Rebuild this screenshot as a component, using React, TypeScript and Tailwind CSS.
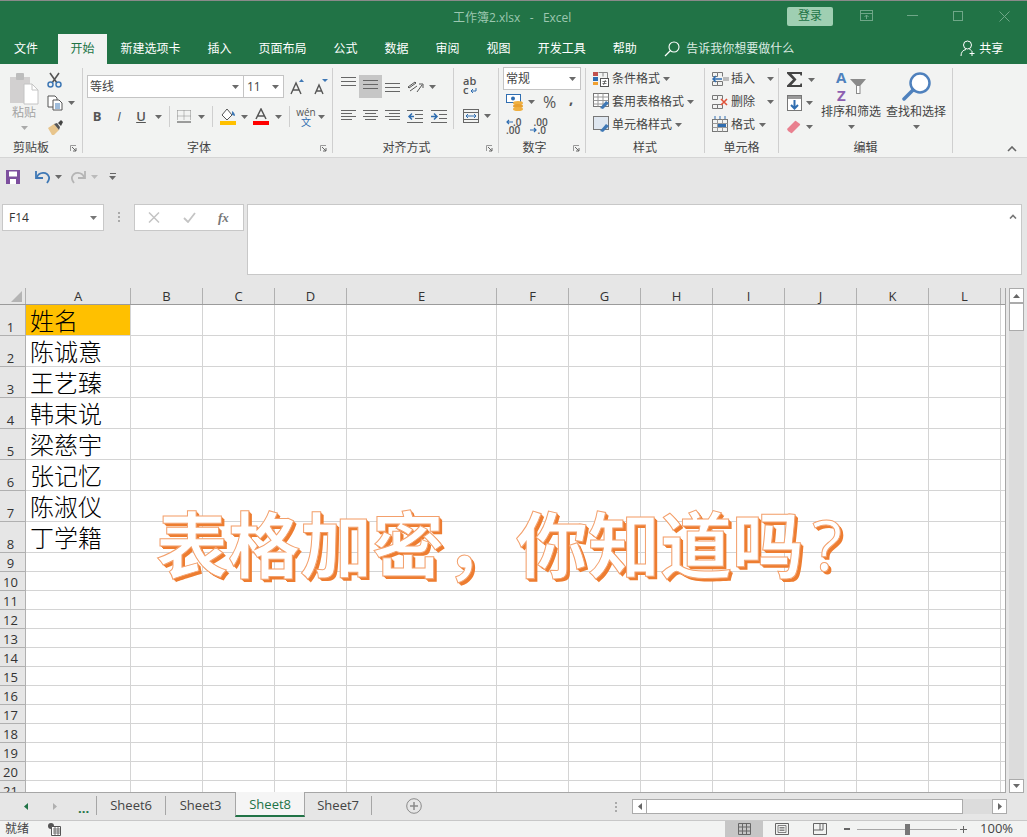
import type { ReactNode } from "react";

const COLS = ["A", "B", "C", "D", "E", "F", "G", "H", "I", "J", "K", "L"];
const COL_WIDTHS = ["w-[105px]", "w-[72px]", "w-[72px]", "w-[72px]", "w-[150px]", "w-[72px]", "w-[72px]", "w-[72px]", "w-[72px]", "w-[72px]", "w-[72px]", "w-[72px]"];
const NAMES = ["姓名", "陈诚意", "王艺臻", "韩束说", "梁慈宇", "张记忆", "陈淑仪", "丁学籍"];
const ROW_NUMBERS = Array.from({ length: 21 }, (_, i) => i + 1);

function Caret({ color = "#6a6a6a" }: { color?: string }) {
  return (
    <svg width="7" height="4" viewBox="0 0 7 4" className="shrink-0">
      <path d="M0 0h7L3.5 4z" fill={color} />
    </svg>
  );
}

function Slot({ w, children }: { w: string; children?: ReactNode }) {
  return <div className={`${w} flex h-full shrink-0 items-center justify-center`}>{children}</div>;
}

function Lines({ widths, gap = 4, color = "#666" }: { widths: [number, number][]; gap?: number; color?: string }) {
  return (
    <svg width="15" height="13" viewBox="0 0 15 13">
      {widths.map(([x, w], i) => (
        <rect key={i} x={x} y={i * gap} width={w} height="1" fill={color} />
      ))}
    </svg>
  );
}

// ── clipboard ──
function PasteIcon() {
  return (
    <svg width="30" height="33" viewBox="0 0 30 33">
      <rect x="1" y="5" width="20" height="26" fill="#d2d0d0" />
      <rect x="7" y="1" width="8" height="7" rx="1" fill="#bdbdbd" />
      <path d="M15 12h8l6 6v14H15z" fill="#fff" stroke="#c4c4c4" />
      <path d="M23 12v6h6" fill="none" stroke="#c4c4c4" />
    </svg>
  );
}

function ScissorsIcon() {
  return (
    <svg width="15" height="16" viewBox="0 0 15 16" fill="none">
      <path d="M3 1l7 10M12 1L5 11" stroke="#555" strokeWidth="1.6" />
      <circle cx="3.5" cy="12.5" r="2.5" stroke="#3f78b5" strokeWidth="1.5" />
      <circle cx="11.5" cy="12.5" r="2.5" stroke="#3f78b5" strokeWidth="1.5" />
    </svg>
  );
}

function CopyIcon() {
  return (
    <svg width="16" height="16" viewBox="0 0 16 16" fill="none">
      <path d="M1 1h7l2 2v9H1z" fill="#fff" stroke="#555" />
      <path d="M6 5h6l3 3v7H6z" fill="#fff" stroke="#555" />
      <path d="M8 9h5M8 11h5M8 13h5" stroke="#3f78b5" />
    </svg>
  );
}

function BrushIcon() {
  return (
    <svg width="16" height="15" viewBox="0 0 16 15">
      <path d="M1 8l6-4 5 6-5 5H5z" fill="#e8c58c" />
      <path d="M7 4l3-1 3 4-1 3z" fill="#555" />
      <path d="M11 3l3-3 2 2-2 4z" fill="#444" />
    </svg>
  );
}

// ── font ──
function GrowA({ up }: { up: boolean }) {
  return (
    <svg width="15" height="16" viewBox="0 0 15 16" fill="none">
      <path d={up ? "M1 15L6 4l5 11M3 11h6" : "M2 15L6 6l4 9M3.5 12h5"} stroke="#555" strokeWidth="1.4" />
      <path d={up ? "M9 3l2.5-3L14 3z" : "M9 0h6l-3 3z"} fill="#3f78b5" />
    </svg>
  );
}

function BorderIcon() {
  return (
    <svg width="14" height="13" viewBox="0 0 14 13" fill="none">
      <path d="M.5.5h13M.5 6h13M.5.5v10M7 .5v10M13.5.5v10" stroke="#888" strokeDasharray="1 1" />
      <path d="M0 12h14" stroke="#444" />
    </svg>
  );
}

function FillIcon() {
  return (
    <svg width="17" height="17" viewBox="0 0 17 17">
      <path d="M2 7l5-6 5 6-5 5z" fill="#fff" stroke="#555" />
      <path d="M12 3c2 1 3 3 3 5l-3-1z" fill="#3f78b5" />
      <rect y="13" width="16" height="4" fill="#ffc000" />
    </svg>
  );
}

function FontColorIcon() {
  return (
    <svg width="16" height="17" viewBox="0 0 16 17" fill="none">
      <path d="M3 11L8 1l5 10M5 8h6" stroke="#555" strokeWidth="1.5" />
      <rect y="13" width="16" height="4" fill="#f00" />
    </svg>
  );
}

function WenIcon() {
  return (
    <div className="flex flex-col items-center text-[10px] leading-[10px] text-[#555]">
      <span className="h-[10px]">wén</span>
      <span className="text-[#2f6db0]">文</span>
    </div>
  );
}

// ── alignment ──
function OrientIcon() {
  return (
    <svg width="17" height="15" viewBox="0 0 17 15" fill="none">
      <path d="M1 8l7-5 1 1-7 5zM3 12l7-5" stroke="#555" />
      <path d="M10 13L15 6M12 5h4v4" stroke="#555" />
    </svg>
  );
}

function IndentIcon({ right }: { right: boolean }) {
  return (
    <svg width="16" height="13" viewBox="0 0 16 13" fill="none">
      <path d="M0 .5h16M8 4.5h8M8 8.5h8M0 12.5h16" stroke="#666" />
      <path d={right ? "M0 6.5h5M3 3.5l3 3-3 3" : "M2 6.5h5M5 3.5l-3 3 3 3"} stroke="#2f6db0" strokeWidth="1.5" />
    </svg>
  );
}

function WrapIcon() {
  return (
    <div className="relative flex h-[17px] w-[14px] flex-col text-[11px] font-semibold leading-[8px] text-[#555]">
      <span className="h-[8px]">ab</span>
      <span className="mt-px h-[8px]">c</span>
      <svg width="7" height="6" viewBox="0 0 7 6" fill="none" className="absolute bottom-0 right-0">
        <path d="M6 0v3H1M3 1L1 3l2 2" stroke="#2f6db0" />
      </svg>
    </div>
  );
}

function MergeIcon() {
  return (
    <svg width="16" height="14" viewBox="0 0 16 14" fill="none">
      <rect x=".5" y=".5" width="15" height="13" stroke="#666" />
      <path d="M.5 3.5h15M.5 10.5h15" stroke="#666" />
      <path d="M3 7h10M5 5L3 7l2 2M11 5l2 2-2 2" stroke="#2f6db0" />
    </svg>
  );
}

// ── number ──
function CurrencyIcon() {
  return (
    <svg width="18" height="18" viewBox="0 0 18 18">
      <rect x=".5" y="1.5" width="14" height="8" fill="#fff" stroke="#2f6db0" />
      <circle cx="7" cy="5.5" r="2" fill="#2f6db0" />
      <ellipse cx="12" cy="10" rx="5" ry="2" fill="#f0b040" />
      <ellipse cx="12" cy="13" rx="5" ry="2" fill="#e8a030" />
      <ellipse cx="12" cy="16" rx="5" ry="2" fill="#f0b040" />
    </svg>
  );
}

function DecimalIcon({ more }: { more: boolean }) {
  return (
    <div className="flex flex-col text-[10px] font-semibold leading-[8px] text-[#555]">
      <div className="flex h-[8px] items-center">
        <svg width="7" height="6" viewBox="0 0 7 6" fill="none" className={more ? "hidden" : "shrink-0"}>
          <path d="M7 3H1M3 1L1 3l2 2" stroke="#2f6db0" strokeWidth="1.2" />
        </svg>
        <span className={more ? "pl-[3px]" : ""}>{more ? ".00" : ".0"}</span>
      </div>
      <div className="flex h-[8px] items-center">
        <svg width="7" height="6" viewBox="0 0 7 6" fill="none" className={more ? "shrink-0" : "hidden"}>
          <path d="M0 3h6M4 1l2 2-2 2" stroke="#2f6db0" strokeWidth="1.2" />
        </svg>
        <span>{more ? ".0" : ".00"}</span>
      </div>
    </div>
  );
}

// ── styles ──
function CondIcon() {
  return (
    <svg width="16" height="16" viewBox="0 0 16 16" fill="none">
      <rect y="1" width="5" height="4" fill="#c0504d" />
      <rect y="6" width="5" height="4" fill="#2f6db0" />
      <rect y="11" width="5" height="3" fill="#f0a030" />
      <path d="M5.5 1.5h9v6M10 1.5v4" stroke="#888" />
      <rect x="7.5" y="7.5" width="8" height="8" fill="#fff" stroke="#555" />
      <path d="M9.5 10.5h4M9.5 12.5h4M12.5 9l-2 5" stroke="#555" strokeWidth=".8" />
    </svg>
  );
}

function TableStyleIcon({ plain }: { plain: boolean }) {
  return (
    <svg width="17" height="17" viewBox="0 0 17 17" fill="none">
      <rect x=".5" y=".5" width="15" height="13" fill={plain ? "#dfe7f0" : "#fff"} stroke="#777" />
      {!plain && <path d="M.5 4h15M.5 7.5h15M.5 11h15M5 .5v13M10 .5v13" stroke="#999" />}
      <path d="M7 15l6-7 3 2-6 6z" fill="#3f78b5" />
    </svg>
  );
}

// ── cells ──
function CellOpIcon({ kind }: { kind: "insert" | "delete" }) {
  return (
    <svg width="17" height="16" viewBox="0 0 17 16" fill="none">
      <path d="M.5 1.5h5v4h-5zM.5 10.5h5v4h-5zM5.5 1.5h5v4M5.5 10.5h5v4h-5z" stroke="#777" />
      {kind === "insert" ? (
        <>
          <rect x="11" y="6" width="6" height="4" fill="#bbb" />
          <path d="M1 8h9M4 5L1 8l3 3" stroke="#2f6db0" strokeWidth="1.5" />
        </>
      ) : (
        <path d="M9 5l6 6M15 5l-6 6" stroke="#e0533a" strokeWidth="1.6" />
      )}
    </svg>
  );
}

function FormatIcon() {
  return (
    <svg width="17" height="17" viewBox="0 0 17 17" fill="none">
      <path d="M3 0v3M8 0v3M13 0v3" stroke="#2f6db0" />
      <rect x=".5" y="3.5" width="15" height="12" stroke="#777" />
      <path d="M.5 7.5h15M.5 11.5h15M5.5 3.5v12M10.5 3.5v12" stroke="#999" />
      <rect x="6" y="8" width="8" height="3" fill="#2f6db0" />
    </svg>
  );
}

// ── editing ──
function SigmaIcon() {
  return (
    <svg width="16" height="15" viewBox="0 0 16 15">
      <path d="M0 0h15v3.5h-1.5L13 2H4.5l5 5.5-5 5.5H13l.5-1.500H15V15H0v-1.500l6-6-6-6z" fill="#444" />
    </svg>
  );
}

function FillDownIcon() {
  return (
    <svg width="15" height="16" viewBox="0 0 15 16" fill="none">
      <rect x=".5" y=".5" width="14" height="15" fill="#fff" stroke="#777" />
      <rect x="1" y="1" width="13" height="3" fill="#999" />
      <path d="M7.5 5v8M4 10l3.5 3.5L11 10" stroke="#2f6db0" strokeWidth="2" />
    </svg>
  );
}

function EraserIcon() {
  return (
    <svg width="14" height="14" viewBox="0 0 14 14">
      <path d="M0 9l8-8a1 1 0 0 1 1 0l4 3a1 1 0 0 1 0 1l-8 8a1 1 0 0 1-1 0L1 11z" fill="#e9808f" />
    </svg>
  );
}

function SortIcon() {
  return (
    <div className="relative h-[29px] w-[30px]">
      <span className="absolute left-0 top-[-2px] text-[15px] font-bold leading-[15px] text-[#4f81bd]">A</span>
      <span className="absolute bottom-[-2px] left-px text-[15px] font-bold leading-[15px] text-[#8d5fb0]">Z</span>
      <svg width="16" height="16" viewBox="0 0 16 16" className="absolute right-0 top-[7px]" fill="none">
        <path d="M0 0h16l-5.5 6.5V15H6V6.5z" fill="#8a8a8a" />
        <path d="M7 7h2.5v7H7z" fill="#fff" />
      </svg>
    </div>
  );
}

function FindIcon() {
  return (
    <svg width="29" height="29" viewBox="0 0 29 29" fill="none">
      <circle cx="18" cy="11" r="9.5" stroke="#4f81bd" strokeWidth="2.5" fill="#fff" />
      <path d="M11 18L2 27" stroke="#4f81bd" strokeWidth="3.5" strokeLinecap="round" />
    </svg>
  );
}

function Launcher() {
  return (
    <svg width="7" height="7" viewBox="0 0 7 7" fill="none">
      <path d="M.5 6V.5H6" stroke="#999" />
      <path d="M2 2l4 4M6 3v3H3" stroke="#666" />
    </svg>
  );
}

function Group({
  w,
  label,
  labelPad,
  launcher = true,
  children,
}: {
  w: string;
  label: string;
  labelPad?: string;
  launcher?: boolean;
  children: ReactNode;
}) {
  return (
    <div className={`${w} my-1 flex shrink-0 flex-col border-r border-[#cfcfcf]`}>
      <div className="h-[72px]">{children}</div>
      <div className="relative flex h-[13px] items-center justify-center pt-[3px] text-xs text-[#444]">
        <span className={labelPad}>{label}</span>
        {launcher && (
          <span className="absolute right-[5px] top-[5px] flex">
            <Launcher />
          </span>
        )}
      </div>
    </div>
  );
}

function StyleRow({ icon, label }: { icon: ReactNode; label: string }) {
  return (
    <div className="flex h-[23px] items-center pl-[7px] text-xs text-[#444]">
      <div className="flex w-[19px] shrink-0">{icon}</div>
      <span className="whitespace-nowrap">{label}</span>
      <span className="ml-[3px]">
        <Caret />
      </span>
    </div>
  );
}

function CellRow({ icon, label, caret }: { icon: ReactNode; label: string; caret: string }) {
  return (
    <div className="flex h-[23px] items-center pl-[7px] text-xs text-[#444]">
      <div className="flex w-[19px] shrink-0">{icon}</div>
      <span>{label}</span>
      <span className={caret}>
        <Caret />
      </span>
    </div>
  );
}

function Ribbon() {
  return (
    <div className="flex h-[93px] bg-[#f2f3f2]">
      <Group w="w-[83px]" label="剪贴板" labelPad="pr-[20px]">
        <div className="flex">
          <div className="ml-[9px] flex w-[30px] flex-col items-center pt-1">
            <PasteIcon />
            <span className="-mt-px text-xs leading-[18px] text-[#a3a3a3]">粘贴</span>
            <span className="mt-[4px]">
              <Caret color="#aaa" />
            </span>
          </div>
          <div className="ml-[8px] flex flex-col">
            <div className="flex h-[23px] items-center"><ScissorsIcon /></div>
            <div className="flex h-[24px] items-center">
              <CopyIcon />
              <span className="ml-[5px]"><Caret /></span>
            </div>
            <div className="flex h-[24px] items-center"><BrushIcon /></div>
          </div>
        </div>
      </Group>

      <Group w="w-[250px]" label="字体" labelPad="pr-[17px]">
        <div className="mt-[7px] flex h-[23px] pl-[4px]">
          <div className="flex w-[157px] items-center justify-between border border-[#c4c4c4] bg-white pl-[2px] pr-[4px] text-xs text-[#444]">
            <span>等线</span>
            <Caret />
          </div>
          <div className="-ml-px flex w-[41px] items-center justify-between border border-[#c4c4c4] bg-white pl-[3px] pr-[4px] text-xs text-[#444]">
            <span>11</span>
            <Caret />
          </div>
          <div className="ml-[6px] flex items-center gap-[8px]">
            <GrowA up />
            <GrowA up={false} />
          </div>
        </div>
        <div className="mt-[6px] flex h-[25px] pl-[3px] text-[#555]">
          <Slot w="w-[22px]"><span className="text-[13px] font-bold">B</span></Slot>
          <Slot w="w-[22px]"><span className="text-[13px] italic">I</span></Slot>
          <Slot w="w-[22px]"><span className="text-[13px] font-semibold underline">U</span></Slot>
          <Slot w="w-[12px]"><Caret /></Slot>
          <Slot w="w-[10px]"><div className="h-[21px] w-px bg-[#cfcfcf]" /></Slot>
          <Slot w="w-[20px]"><BorderIcon /></Slot>
          <Slot w="w-[14px]"><Caret /></Slot>
          <Slot w="w-[8px]"><div className="h-[21px] w-px bg-[#cfcfcf]" /></Slot>
          <Slot w="w-[24px]"><FillIcon /></Slot>
          <Slot w="w-[8px]"><Caret /></Slot>
          <Slot w="w-[26px]"><FontColorIcon /></Slot>
          <Slot w="w-[8px]"><Caret /></Slot>
          <Slot w="w-[14px]"><div className="h-[21px] w-px bg-[#cfcfcf]" /></Slot>
          <Slot w="w-[20px]"><WenIcon /></Slot>
          <Slot w="w-[10px]"><Caret /></Slot>
        </div>
      </Group>

      <Group w="w-[166px]" label="对齐方式" labelPad="pr-[18px]">
        <div className="flex">
          <div className="w-[121px] border-r border-[#cfcfcf] pl-[4px]">
            <div className="mt-[7px] flex h-[23px]">
              <Slot w="w-[22px]"><div className="pb-[6px]"><Lines widths={[[0, 15], [0, 15], [0, 15]]} /></div></Slot>
              <Slot w="w-[23px]">
                <div className="flex h-full w-full items-center justify-center bg-[#c6c6c6]">
                  <Lines widths={[[0, 15], [0, 15], [0, 15]]} />
                </div>
              </Slot>
              <Slot w="w-[20px]"><div className="pt-[6px]"><Lines widths={[[0, 15], [0, 15], [0, 15]]} /></div></Slot>
              <Slot w="w-[26px]"><OrientIcon /></Slot>
              <Slot w="w-[8px]"><Caret /></Slot>
            </div>
            <div className="mt-[6px] flex h-[25px]">
              <Slot w="w-[22px]"><Lines widths={[[0, 15], [0, 11], [0, 15], [0, 11]]} gap={3} /></Slot>
              <Slot w="w-[23px]"><Lines widths={[[0, 15], [2, 11], [0, 15], [2, 11]]} gap={3} /></Slot>
              <Slot w="w-[20px]"><Lines widths={[[0, 15], [4, 11], [0, 15], [4, 11]]} gap={3} /></Slot>
              <Slot w="w-[26px]"><IndentIcon right={false} /></Slot>
              <Slot w="w-[22px]"><IndentIcon right /></Slot>
            </div>
          </div>
          <div className="flex flex-col pl-[9px]">
            <div className="mt-[9px] flex h-[21px] items-start"><WrapIcon /></div>
            <div className="mt-[5px] flex h-[25px] items-center">
              <MergeIcon />
              <span className="ml-[5px]"><Caret /></span>
            </div>
          </div>
        </div>
      </Group>

      <Group w="w-[87px]" label="数字" labelPad="pr-[15px]">
        <div className="-mt-px ml-[4px] flex h-[23px] w-[78px] items-center justify-between border border-[#c4c4c4] bg-white pl-[2px] pr-[4px] text-xs text-[#444]">
          <span>常规</span>
          <Caret />
        </div>
        <div className="mt-[2px] flex h-[20px] items-center pl-[7px]">
          <CurrencyIcon />
          <span className="ml-[4px]"><Caret /></span>
          <span className="ml-[8px] w-[14px] text-[16px] leading-none text-[#555]">%</span>
          <span className="ml-[12px] -translate-y-[4px] text-[15px] font-bold leading-none text-[#555]">,</span>
        </div>
        <div className="mt-[3px] flex h-[22px] items-center pl-[7px]">
          <DecimalIcon more={false} />
          <span className="ml-[9px]"><DecimalIcon more /></span>
        </div>
      </Group>

      <Group w="w-[119px]" label="样式" launcher={false}>
        <div className="-mt-px">
          <StyleRow icon={<CondIcon />} label="条件格式" />
          <StyleRow icon={<TableStyleIcon plain={false} />} label="套用表格格式" />
          <StyleRow icon={<TableStyleIcon plain />} label="单元格样式" />
        </div>
      </Group>

      <Group w="w-[74px]" label="单元格" launcher={false}>
        <div className="-mt-px">
          <CellRow icon={<CellOpIcon kind="insert" />} label="插入" caret="ml-[12px]" />
          <CellRow icon={<CellOpIcon kind="delete" />} label="删除" caret="ml-[12px]" />
          <CellRow icon={<FormatIcon />} label="格式" caret="ml-[4px]" />
        </div>
      </Group>

      <Group w="w-[174px]" label="编辑" launcher={false}>
        <div className="flex">
          <div className="ml-[8px] flex flex-col">
            <div className="flex h-[23px] items-center">
              <SigmaIcon />
              <span className="ml-[5px]"><Caret /></span>
            </div>
            <div className="flex h-[24px] items-center">
              <FillDownIcon />
              <span className="ml-[4px]"><Caret /></span>
            </div>
            <div className="flex h-[24px] items-center">
              <EraserIcon />
              <span className="ml-[5px]"><Caret /></span>
            </div>
          </div>
          <div className="ml-[5px] flex w-[62px] flex-col items-center pt-1 text-xs text-[#444]">
            <SortIcon />
            <span className="mt-[2px] whitespace-nowrap leading-[18px]">排序和筛选</span>
            <span className="mt-[4px]"><Caret /></span>
          </div>
          <div className="ml-[4px] flex w-[60px] flex-col items-center pt-1 text-xs text-[#444]">
            <FindIcon />
            <span className="mt-[2px] whitespace-nowrap leading-[18px]">查找和选择</span>
            <span className="mt-[4px]"><Caret /></span>
          </div>
        </div>
      </Group>

      <div className="flex flex-1 items-end justify-end pb-[5px] pr-[10px]">
        <svg width="10" height="6" viewBox="0 0 10 6" fill="none">
          <path d="M1 5l4-4 4 4" stroke="#666" strokeWidth="1.6" />
        </svg>
      </div>
    </div>
  );
}

function TitleBar() {
  return (
    <div className="flex h-[33px] items-center bg-[#217346] text-xs text-[#9cc7b0]">
      <span className="ml-[453px] w-[334px] whitespace-pre">工作簿2.xlsx   -   Excel</span>
      <span className="-mt-[3px] flex h-[19px] w-[46px] items-center justify-center rounded-[2px] bg-[#9fcfb2] text-[#217346]">登录</span>
      <svg width="15" height="12" viewBox="0 0 15 12" fill="none" className="-mt-[3px] ml-[27px]">
        <rect x=".5" y=".5" width="12" height="10" stroke="#6fa788" />
        <path d="M.5 3.5h12M6.5 9V5M4.5 7l2-2 2 2" stroke="#6fa788" />
      </svg>
      <svg width="11" height="2" viewBox="0 0 11 2" className="-mt-[3px] ml-[32px]">
        <rect width="11" height="1" fill="#6fa788" />
      </svg>
      <svg width="10" height="10" viewBox="0 0 10 10" fill="none" className="-mt-[3px] ml-[35px]">
        <rect x=".5" y=".5" width="9" height="9" stroke="#6fa788" />
      </svg>
      <svg width="11" height="11" viewBox="0 0 11 11" fill="none" className="-mt-[3px] ml-[36px]">
        <path d="M.5.5l10 10M10.5.5l-10 10" stroke="#6fa788" />
      </svg>
    </div>
  );
}

function TabBar() {
  const tabs = ["新建选项卡", "插入", "页面布局", "公式", "数据", "审阅", "视图", "开发工具", "帮助"];
  return (
    <div className="flex h-[30px] items-center bg-[#217346] pb-px text-xs text-white">
      <span className="pl-[14px] pr-[20px]">文件</span>
      <span className="-mb-px flex h-[30px] w-[49px] items-center justify-center bg-[#f2f3f2] pb-px text-[#217346]">开始</span>
      {tabs.map((t) => (
        <span key={t} className="whitespace-nowrap px-[13.5px]">{t}</span>
      ))}
      <svg width="16" height="16" viewBox="0 0 16 16" fill="none" className="ml-[14px]">
        <circle cx="10" cy="6" r="5" stroke="#fff" strokeWidth="1.1" />
        <path d="M6.5 9.5L1 15" stroke="#fff" strokeWidth="1.3" />
      </svg>
      <span className="ml-[6px] w-[274px] text-[#dcebe3]">告诉我你想要做什么</span>
      <svg width="16" height="17" viewBox="0 0 16 17" fill="none">
        <circle cx="7.5" cy="5" r="4" stroke="#fff" />
        <path d="M1 16c0-4 2-6 5-6.5M9.5 9.5c1 .2 1.5.5 2 1M12 11v5M9.500 13.500h5" stroke="#fff" />
      </svg>
      <span className="ml-[3px]">共享</span>
    </div>
  );
}

function QuickAccess() {
  return (
    <div className="flex h-[38px] items-center border-t border-[#d5d5d5] pl-[6px]">
      <svg width="14" height="14" viewBox="0 0 14 14">
        <path d="M0 0h14v14H0z" fill="#7d4f9e" />
        <rect x="3" y="1.5" width="8" height="5" fill="#fff" />
        <rect x="4" y="9" width="6" height="5" fill="#fff" />
      </svg>
      <svg width="15" height="14" viewBox="0 0 15 14" fill="none" className="ml-[15px]">
        <path d="M2 7c2-5 10-6 12 0 .6 2-.5 4-2 6" stroke="#3f78b5" strokeWidth="1.8" />
        <path d="M1 1v7h7" stroke="#3f78b5" strokeWidth="1.8" />
      </svg>
      <span className="ml-[5px]"><Caret /></span>
      <svg width="15" height="14" viewBox="0 0 15 14" fill="none" className="ml-[9px]">
        <path d="M13 7C11 2 3 1 1 7c-.6 2 .5 4 2 6" stroke="#b5b5b5" strokeWidth="1.8" />
        <path d="M14 1v7H7" stroke="#b5b5b5" strokeWidth="1.8" />
      </svg>
      <span className="ml-[5px]"><Caret color="#bbb" /></span>
      <span className="ml-[11px] flex flex-col items-center gap-[2px]">
        <span className="h-px w-[6px] bg-[#666]" />
        <Caret />
      </span>
    </div>
  );
}

function FormulaBar() {
  return (
    <div className="flex h-[71px] items-start pt-[1px] pl-[2px]">
      <div className="flex h-[27px] w-[102px] items-center justify-between border border-[#c8c8c8] bg-white pl-[6px] pr-[6px] text-xs text-[#333]">
        <span>F14</span>
        <Caret color="#777" />
      </div>
      <div className="mt-[8px] ml-[14px] flex flex-col gap-[2px]">
        <span className="h-[2px] w-[2px] bg-[#aaa]" />
        <span className="h-[2px] w-[2px] bg-[#aaa]" />
        <span className="h-[2px] w-[2px] bg-[#aaa]" />
      </div>
      <div className="ml-[14px] flex h-[27px] w-[110px] items-center border border-[#c8c8c8] bg-white pl-[13px]">
        <svg width="12" height="11" viewBox="0 0 12 11" fill="none">
          <path d="M1 .5l10 10M11 .5l-10 10" stroke="#c4c4c4" strokeWidth="1.5" />
        </svg>
        <svg width="13" height="11" viewBox="0 0 13 11" fill="none" className="ml-[23px]">
          <path d="M1 6l4 4 7-9" stroke="#c4c4c4" strokeWidth="1.8" />
        </svg>
        <span className="ml-[22px] [font-family:'Liberation_Serif',serif] text-[13px] font-bold italic leading-none text-[#777]">fx</span>
      </div>
      <div className="ml-[3px] flex h-[71px] w-[775px] items-start justify-end border border-[#c8c8c8] bg-white pr-[4px] pt-[9px]">
        <svg width="8" height="5" viewBox="0 0 8 5" fill="none">
          <path d="M1 4.5l3-3 3 3" stroke="#777" strokeWidth="1.6" />
        </svg>
      </div>
    </div>
  );
}

function Sheet() {
  return (
    <div className="h-[505px] w-[1006px] shrink-0 overflow-hidden border-r border-b border-[#a6a6a6]">
      <div className="flex h-[17px] border-b border-[#9b9b9b] text-[13px] leading-[16px] text-[#333]">
        <div className="flex w-[26px] shrink-0 items-end justify-end border-r border-[#b0b0b0] pb-[2px] pr-[3px]">
          <svg width="11" height="11" viewBox="0 0 11 11">
            <path d="M11 0v11H0z" fill="#b4b4b4" />
          </svg>
        </div>
        {COLS.map((c, i) => (
          <div key={c} className={`${COL_WIDTHS[i]} shrink-0 border-r border-[#b0b0b0] text-center`}>{c}</div>
        ))}
      </div>
      {ROW_NUMBERS.map((n) => (
        <div key={n} className={`flex ${n <= 8 ? "h-[31px]" : "h-[19px]"}`}>
          <div className="flex w-[26px] shrink-0 items-end justify-center border-r border-b border-[#b0b0b0] bg-[#e6e6e6] pr-[4px] text-[13px] leading-[16px] text-[#333]">{n}</div>
          {COLS.map((c, i) => (
            <div
              key={c}
              className={`${COL_WIDTHS[i]} shrink-0 border-r border-b border-[#d4d4d4] ${
                n === 1 && i === 0 ? "bg-[#ffc000]" : "bg-white"
              } overflow-visible whitespace-nowrap pl-[4px] text-2xl font-light leading-[32px] text-black`}
            >
              {i === 0 ? NAMES[n - 1] : null}
            </div>
          ))}
          <div className="w-[4px] shrink-0 border-b border-[#d4d4d4] bg-white" />
        </div>
      ))}
    </div>
  );
}

function VScroll() {
  return (
    <div className="ml-[3px] flex h-[505px] w-[15px] flex-col">
      <div className="flex h-[15px] items-center justify-center border border-[#ababab] bg-white">
        <svg width="7" height="4" viewBox="0 0 7 4"><path d="M3.5 0L7 4H0z" fill="#666" /></svg>
      </div>
      <div className="h-[28px] border border-[#ababab] bg-white" />
      <div className="flex-1 bg-[#dcdcdc]" />
      <div className="flex h-[14px] items-center justify-center border border-[#ababab] bg-white">
        <Caret />
      </div>
    </div>
  );
}

function SheetTabs() {
  return (
    <div className="flex h-[27px] items-start text-[13px] text-[#444]">
      <span className="ml-[24px] mt-[10px] flex">
        <svg width="4" height="7" viewBox="0 0 4 7"><path d="M4 0v7L0 3.5z" fill="#217346" /></svg>
      </span>
      <span className="ml-[25px] mt-[10px] flex">
        <svg width="4" height="7" viewBox="0 0 4 7"><path d="M0 0v7l4-3.5z" fill="#b0b0b0" /></svg>
      </span>
      <span className="ml-[21px] mt-[8px] text-[13px] font-bold leading-[14px] text-[#217346]">...</span>
      <div className="ml-[7px] mt-[3px] flex h-[19px] w-[70px] items-center justify-center border-x border-[#a6a6a6]">Sheet6</div>
      <div className="mt-[3px] flex h-[19px] w-[69px] items-center justify-center">Sheet3</div>
      <div className="-mt-px flex h-[25px] w-[70px] items-center justify-center border-x border-b-2 border-[#a6a6a6] border-b-[#217346] bg-[#f5f5f5] pt-[2px] text-[#217346]">Sheet8</div>
      <div className="mt-[3px] flex h-[19px] w-[67px] items-center justify-center border-r border-[#a6a6a6]">Sheet7</div>
      <svg width="16" height="16" viewBox="0 0 16 16" fill="none" className="ml-[34px] mt-[5px]">
        <circle cx="8" cy="8" r="7.3" stroke="#8a8a8a" />
        <path d="M8 4v8M4 8h8" stroke="#8a8a8a" strokeWidth="1.5" />
      </svg>
      <div className="ml-[193px] mt-[9px] flex flex-col gap-[2px]">
        <span className="h-[2px] w-[2px] bg-[#aaa]" />
        <span className="h-[2px] w-[2px] bg-[#aaa]" />
        <span className="h-[2px] w-[2px] bg-[#aaa]" />
      </div>
      <div className="ml-[15px] mt-[6px] flex h-[15px] items-stretch">
        <div className="flex w-[15px] items-center justify-center border border-[#ababab] bg-white">
          <svg width="4" height="7" viewBox="0 0 4 7"><path d="M4 0v7L0 3.5z" fill="#666" /></svg>
        </div>
        <div className="w-[316px] border-y border-r border-[#ababab] bg-white" />
        <div className="w-[29px] bg-[#dcdcdc]" />
        <div className="flex w-[15px] items-center justify-center border border-[#ababab] bg-white">
          <svg width="4" height="7" viewBox="0 0 4 7"><path d="M0 0v7l4-3.5z" fill="#666" /></svg>
        </div>
      </div>
    </div>
  );
}

function StatusBar() {
  return (
    <div className="flex h-[17px] items-center border-t border-[#c8c8c8] bg-[#f2f3f2] text-xs text-[#444]">
      <span className="ml-[5px]">就绪</span>
      <svg width="13" height="13" viewBox="0 0 13 13" fill="none" className="ml-[19px]">
        <circle cx="3" cy="3" r="3" fill="#555" />
        <path d="M3.5 3.5h9v9h-9z" fill="#fff" stroke="#555" />
        <path d="M5 6h7M5 8h7M5 10h7M7 4v8M10 4v8" stroke="#555" strokeWidth=".8" />
      </svg>
      <div className="ml-[664px] flex h-full w-[38px] items-center justify-center bg-[#c6c6c6]">
        <svg width="13" height="12" viewBox="0 0 13 12" fill="none">
          <path d="M.5.5h12v11H.5zM.5 4h12M.5 8h12M4.5.5v11M8.5.5v11" stroke="#666" />
        </svg>
      </div>
      <svg width="14" height="12" viewBox="0 0 14 12" fill="none" className="ml-[12px]">
        <path d="M.5.5h13v11H.5z" stroke="#666" />
        <path d="M3 2.5h8v7H3zM4.5 4.5h5M4.5 6h5M4.5 7.5h5" stroke="#666" strokeWidth=".8" />
      </svg>
      <svg width="14" height="12" viewBox="0 0 14 12" fill="none" className="ml-[24px]">
        <path d="M.5.5h13v11H.5zM.5 7h6.5M7 .5V7M10 .5V7H7" stroke="#666" />
      </svg>
      <span className="ml-[17px] h-[2px] w-[6px] bg-[#666]" />
      <div className="ml-[7px] flex h-px w-[100px] items-center justify-center bg-[#a6a6a6]">
        <span className="h-[11px] w-[5px] bg-[#777]" />
      </div>
      <svg width="7" height="7" viewBox="0 0 7 7" className="ml-[3px]">
        <path d="M3 0h1v3h3v1H4v3H3V4H0V3h3z" fill="#666" />
      </svg>
      <span className="ml-[13px] text-[13px]">100%</span>
    </div>
  );
}

export default function App() {
  return (
    <div className="relative h-[837px] w-[1027px] overflow-hidden border-t border-[#8a8a8a] bg-[#e6e6e6] [font-family:'Open_Sans','Noto_Sans_CJK_SC',sans-serif]">
      <TitleBar />
      <TabBar />
      <Ribbon />
      <QuickAccess />
      <div className="mt-[8px]">
        <FormulaBar />
      </div>
      <div className="mt-[14px] flex">
        <Sheet />
        <VScroll />
      </div>
      <SheetTabs />
      <StatusBar />

      {/* caption burned over the recording */}
      <div className="pointer-events-none absolute left-[156px] top-[500px] flex h-[86px] items-end whitespace-nowrap text-[72px] font-bold leading-[86px] text-white [-webkit-text-stroke:1px_#f3a06c] [text-shadow:1px_1px_0_#ed7d31,2px_2px_0_#ed7d31,3px_3px_0_#ed7d31]">
        <span>表格加密，你知道吗</span>
        <span className="ml-[8px] text-[70px] font-medium [font-family:'Open_Sans',sans-serif]">?</span>
      </div>
    </div>
  );
}
